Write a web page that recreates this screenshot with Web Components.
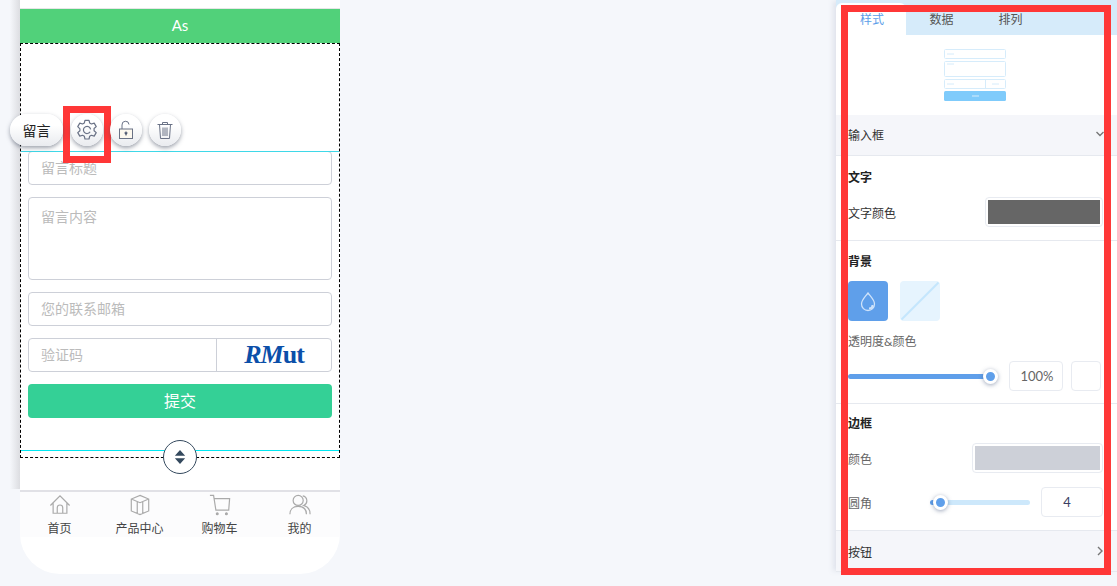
<!DOCTYPE html>
<html lang="zh">
<head>
<meta charset="utf-8">
<title>留言</title>
<style>
	html, body {
		margin: 0;
		height: 586px;
		overflow: hidden;
		background: #f5f7fb;
		font-family: Lato, "Noto Sans CJK SC", sans-serif;
	}
	body {
		position: relative;
		display: flex;
		justify-content: space-between;
		align-items: flex-start;
	}
</style>
</head>
<body>
<phone-preview></phone-preview>
<style-panel></style-panel>
<red-mark style="left:63px;top:106px;width:48px;height:57px"></red-mark>
<red-mark style="left:841px;top:5px;width:270px;height:570px"></red-mark>

<script>
	class RedMark extends HTMLElement {
		constructor() {
			super();
			let shadowRoot = this.attachShadow({mode: 'open'});
			shadowRoot.innerHTML = `
				<style>
					:host {
						position: absolute;
						box-sizing: border-box;
						border: 7px solid #ff3737;
						pointer-events: none;
					}
				</style>
			`;
		}
	}

	class FormField extends HTMLElement {
		constructor() {
			super();
			let shadowRoot = this.attachShadow({mode: 'open'});
			shadowRoot.innerHTML = `
				<style>
					:host {
						display: flex;
						box-sizing: border-box;
						height: 34px;
						border: 1px solid #cdd0d8;
						border-radius: 4px;
						background: #fff;
						font-size: 14px;
						line-height: 32px;
						color: #bbb;
					}
					:host([tall]) {
						height: 83px;
						line-height: 38px;
					}
					.label {
						flex: 1;
						padding-left: 12px;
					}
					::slotted(*) {
						width: 114px;
						border-left: 1px solid #cdd0d8;
					}
				</style>
				<div class="label">${this.getAttribute('label')}</div>
				<slot></slot>
			`;
		}
	}

	class NavItem extends HTMLElement {
		constructor() {
			super();
			let shadowRoot = this.attachShadow({mode: 'open'});
			shadowRoot.innerHTML = `
				<style>
					:host {
						flex: 1;
						display: flex;
						flex-direction: column;
						align-items: center;
						box-sizing: border-box;
						padding-right: 1px;
						font-size: 12px;
						line-height: 16px;
						color: #444;
					}
					::slotted(svg) {
						display: block;
						width: 22px;
						height: 22px;
						margin: 2px 0 5px;
						fill: none;
						stroke: #aaa;
						stroke-width: 1.3;
					}
				</style>
				<slot></slot>
				<span>${this.getAttribute('label')}</span>
			`;
		}
	}

	class ToolButton extends HTMLElement {
		constructor() {
			super();
			let shadowRoot = this.attachShadow({mode: 'open'});
			shadowRoot.innerHTML = `
				<style>
					:host {
						display: flex;
						align-items: center;
						justify-content: center;
						box-sizing: border-box;
						width: 32px;
						height: 32px;
						border-radius: 16px;
						background: linear-gradient(#fff 35%, #e9ebef);
						box-shadow: 0 2px 4px rgba(60, 70, 90, .5);
						font-size: 14px;
						color: #222;
					}
					:host([wide]) {
						width: 53px;
						margin-right: 1px;
					}
					::slotted(svg) {
						width: 20px;
						height: 20px;
						fill: none;
						stroke: #6a7286;
						stroke-width: 1;
					}
				</style>
				<slot></slot>
			`;
		}
	}

	class PhonePreview extends HTMLElement {
		constructor() {
			super();
			let shadowRoot = this.attachShadow({mode: 'open'});
			shadowRoot.innerHTML = `
				<style>
					:host {
						position: relative;
						display: flex;
						flex-direction: column;
						flex: none;
						width: 320px;
						height: 574px;
						margin-left: 20px;
						background: #fff;
						border-radius: 0 0 40px 40px;
					}
					:host::before {
						content: '';
						position: absolute;
						left: -20px;
						top: 0;
						width: 20px;
						height: 489px;
						background: linear-gradient(90deg, #f5f7fb 50%, #dcdde1);
					}
					.top {
						height: 8px;
						border-bottom: 1px solid #e6e6e6;
					}
					.title {
						height: 34px;
						background: #51d17a;
						color: #fff;
						font-size: 15px;
						line-height: 33px;
						text-align: center;
					}
					.module {
						position: relative;
						box-sizing: border-box;
						display: flex;
						flex-direction: column;
						gap: 12px;
						height: 415px;
						padding: 107px 7px 0;
						border: 1px dashed #000;
					}
					.line {
						position: absolute;
						left: 0;
						right: 0;
						height: 1px;
						background: #3fd8e8;
					}
					.line.top-line {
						top: 107px;
					}
					.line.bottom-line {
						top: 406px;
						background: #00e8f2;
					}
					.captcha {
						display: block;
						text-align: center;
						font: bold 26px/31px "Liberation Serif", serif;
						letter-spacing: -1px;
						color: #0b4fa9;
					}
					.submit {
						height: 34px;
						border-radius: 4px;
						background: #34d096;
						color: #fff;
						font-size: 16px;
						line-height: 34px;
						text-align: center;
					}
					.tools {
						position: absolute;
						left: -11px;
						top: 70px;
						display: flex;
						gap: 7px;
						z-index: 2;
					}
					.handle {
						position: absolute;
						left: 142px;
						top: 396px;
						box-sizing: border-box;
						width: 34px;
						height: 34px;
						border: 1.5px solid #34495e;
						border-radius: 50%;
						background: #fff;
						display: flex;
						align-items: center;
						justify-content: center;
						z-index: 2;
					}
					.spacer {
						height: 32px;
					}
					.nav {
						display: flex;
						box-sizing: border-box;
						height: 47px;
						border-top: 2px solid #e1e1e6;
						background: #fcfcfd;
					}
				</style>
				<div class="top"></div>
				<div class="title">As</div>
				<div class="module">
					<div class="line top-line"></div>
					<div class="line bottom-line"></div>
					<div class="tools">
						<tool-button wide>留言</tool-button>
						<tool-button>
							<svg viewBox="0 0 20 20" style="width:24px;height:24px">
								<path d="M8.300 1.900h3.400l.5 2.200 1.500.9 2.300-.7 1.700 2.900-1.800 1.600v1.800l1.800 1.600-1.700 2.900-2.300-.7-1.500.9-.5 2.200H8.300l-.5-2.200-1.500-.9-2.300.7-1.700-2.900 1.800-1.600V9L2.300 7.200 4 4.300l2.300.7 1.500-.9z" stroke-linejoin="round"/>
								<path d="M12.600 11.500A3 3 0 1 1 13 9.500"/>
							</svg>
						</tool-button>
						<tool-button>
							<svg viewBox="0 0 20 20">
								<rect x="3.500" y="9" width="13" height="9.500" fill="#fdf8ee"/>
								<path d="M6 9V5a3.500 3.500 0 0 1 7-.5"/>
								<circle cx="10" cy="13" r="1.100" fill="#3d4660"/>
								<path d="M10 13v2.500" stroke="#3d4660"/>
							</svg>
						</tool-button>
						<tool-button>
							<svg viewBox="0 0 20 20">
								<path d="M2.500 4.500h15M7.500 4.500V2.500h5v2M4.500 4.500l1 14h9l1-14M8 7.500v8.500M10 7.500v8.500M12 7.500v8.500"/>
							</svg>
						</tool-button>
					</div>
					<form-field label="留言标题"></form-field>
					<form-field tall label="留言内容"></form-field>
					<form-field label="您的联系邮箱"></form-field>
					<form-field label="验证码"><span class="captcha"><i>RM</i>ut</span></form-field>
					<div class="submit">提交</div>
					<div class="handle">
						<svg width="12" height="14" viewBox="0 0 14 16" preserveAspectRatio="none">
							<path d="M7 0l6 6.500H1zM1 9.500h12L7 16z" fill="#34495e"/>
						</svg>
					</div>
				</div>
				<div class="spacer"></div>
				<div class="nav">
					<nav-item label="首页">
						<svg viewBox="0 0 24 24"><path d="M1.500 12.500L12 2l10.500 10.500M4.500 10v11h15V10M9 21v-6a3 3 0 0 1 6 0v6"/></svg>
					</nav-item>
					<nav-item label="产品中心">
						<svg viewBox="0 0 24 24"><path d="M12 1.500l9.500 4v13l-9.500 4-9.500-4v-13zM2.500 5.500l9.500 4 9.500-4M9 8.200v13M15 8.200v13"/></svg>
					</nav-item>
					<nav-item label="购物车">
						<svg viewBox="0 0 24 24"><path d="M1 1.500h4l2.500 16h14l1-12.500H5.500"/><circle cx="9" cy="21.500" r="1" fill="#aaa"/><circle cx="19" cy="21.500" r="1" fill="#aaa"/></svg>
					</nav-item>
					<nav-item label="我的">
						<svg viewBox="0 0 24 24"><circle cx="10" cy="7" r="5.500"/><path d="M1 22c0-5 3-8.500 9-8.500s9 3.500 9 8.500M15 2a5.500 5.500 0 0 1 1 10.500c4 1 7 4.500 7 9.500"/></svg>
					</nav-item>
				</div>
			`;
		}
	}

	class PanelSlider extends HTMLElement {
		constructor() {
			super();
			let at = this.getAttribute('at');
			let shadowRoot = this.attachShadow({mode: 'open'});
			shadowRoot.innerHTML = `
				<style>
					:host {
						position: relative;
						display: block;
						height: 5px;
						border-radius: 3px;
						background: linear-gradient(90deg, #5f9fea ${at}px, #cde8fb ${at}px);
					}
					.thumb {
						position: absolute;
						left: ${at - 7}px;
						top: -5px;
						box-sizing: border-box;
						width: 15px;
						height: 15px;
						border: 3px solid #fff;
						border-radius: 50%;
						background: #5f9fea;
						box-shadow: 0 1px 4px rgba(60, 80, 120, .5);
					}
				</style>
				<div class="thumb"></div>
			`;
		}
	}

	class PanelBox extends HTMLElement {
		constructor() {
			super();
			let shadowRoot = this.attachShadow({mode: 'open'});
			shadowRoot.innerHTML = `
				<style>
					:host {
						display: flex;
						box-sizing: border-box;
						height: 30px;
						padding: 2px;
						border: 1px solid #e8ebf1;
						border-radius: 4px;
						background: #fff;
						align-items: center;
						justify-content: center;
						font-size: 13px;
						color: #666;
					}
					.fill {
						flex: 1;
						align-self: stretch;
					}
				</style>
				${this.hasAttribute('fill') ? `<div class="fill" style="background:${this.getAttribute('fill')}"></div>` : ''}
				<slot></slot>
			`;
		}
	}

	class StylePanel extends HTMLElement {
		constructor() {
			super();
			let shadowRoot = this.attachShadow({mode: 'open'});
			shadowRoot.innerHTML = `
				<style>
					:host {
						display: block;
						flex: none;
						width: 281px;
						height: 572px;
						background: #fff;
						box-shadow: -4px 0 5px -1px rgba(200, 205, 220, .45);
						font-size: 12px;
						color: #333;
					}
					.tabs {
						display: flex;
						box-sizing: border-box;
						height: 35px;
						padding-top: 3px;
						background: #d6ebfa;
						line-height: 33px;
						text-align: center;
						color: #555;
					}
					.tabs div {
						box-sizing: border-box;
						width: 69px;
						padding-left: 2px;
					}
					.tabs .active {
						width: 70px;
						border-radius: 6px 6px 0 0;
						background: #fff;
						color: #5b9de8;
					}
					.preview {
						display: flex;
						justify-content: center;
						box-sizing: border-box;
						height: 80px;
						padding: 14px 3px 0 0;
					}
					.fold {
						display: flex;
						justify-content: space-between;
						align-items: center;
						box-sizing: border-box;
						height: 41px;
						padding: 0 13px 0 12px;
						background: #f5f6fa;
						border-bottom: 1px solid #e6e9ef;
					}
					.section {
						box-sizing: border-box;
						padding: 0 14px 0 12px;
						border-bottom: 1px solid #e6e9ef;
					}
					.heading {
						font-weight: 700;
						color: #222;
						line-height: 18px;
					}
					.row {
						display: flex;
						align-items: center;
						justify-content: space-between;
						height: 30px;
					}
					.gray {
						color: #666;
					}
					.kinds {
						display: flex;
						gap: 12px;
						margin-top: 10px;
					}
					.kinds div {
						width: 40px;
						height: 40px;
						border-radius: 4px;
						background: #5f9fea;
					}
					.kinds svg {
						display: block;
					}
					.kinds .none {
						background: #e6f4fe;
					}
				</style>
				<div class="tabs">
					<div class="active">样式</div>
					<div>数据</div>
					<div>排列</div>
				</div>
				<div class="preview">
					<svg width="62" height="52" viewBox="0 0 62 52" fill="none" stroke="#d6ecfb">
						<rect x=".5" y=".5" width="61" height="9" rx="1"/>
						<rect x=".5" y="12.500" width="61" height="15" rx="1"/>
						<rect x=".5" y="30.500" width="61" height="9" rx="1"/>
						<path d="M41.500 30.500v9M3 5h7M3 15h7M3 35h7M48 35h7"/>
						<rect y="42" width="62" height="10" rx="1.500" fill="#7fcbfb" stroke="none"/>
						<path d="M28 47h7" stroke="#d6ecfb"/>
					</svg>
				</div>
				<div class="fold" style="padding-bottom:2px">
					<span>输入框</span>
					<svg width="8" height="8" viewBox="0 0 8 8" fill="none" stroke="#777" stroke-width="1.400"><path d="M.5 2L4 5.500 7.500 2"/></svg>
				</div>
				<div class="section" style="height:85px;padding-top:13px">
					<div class="heading">文字</div>
					<div class="row" style="margin-top:10px">
						<span>文字颜色</span>
						<panel-box fill="#666" style="width:118px"></panel-box>
					</div>
				</div>
				<div class="section" style="height:163px;padding-top:12px">
					<div class="heading">背景</div>
					<div class="kinds">
						<div>
							<svg width="40" height="40" viewBox="0 0 40 40" fill="none" stroke="#cfe3fa" stroke-width="1.300">
								<path d="M20 12c3 4 6.500 7 6.500 11a6.500 6.500 0 0 1-13 0c0-4 3.500-7 6.500-11z"/>
								<path d="M21 27.500c2 0 3.500-1.500 3.500-3.500" stroke-width="2"/>
							</svg>
						</div>
						<div class="none">
							<svg width="40" height="40" viewBox="0 0 40 40" fill="none" stroke="#c4e6fd" stroke-width="2"><path d="M1.500 38.500l37-37"/></svg>
						</div>
					</div>
					<div class="gray" style="line-height:18px;margin-top:12px">透明度&amp;颜色</div>
					<div class="row" style="margin-top:10px;justify-content:flex-start">
						<panel-slider at="142" style="width:142px"></panel-slider>
						<panel-box style="width:54px;margin-left:19px;padding-left:4px">100%</panel-box>
						<panel-box style="width:30px;margin-left:8px"></panel-box>
					</div>
				</div>
				<div class="section" style="height:127px;padding-top:11px">
					<div class="heading">边框</div>
					<div class="row" style="margin-top:10px">
						<span class="gray">颜色</span>
						<panel-box fill="#cdd0d8" style="width:131px"></panel-box>
					</div>
					<div class="row" style="margin-top:14px;justify-content:flex-start">
						<span class="gray">圆角</span>
						<panel-slider at="10" style="width:100px;margin-left:58px"></panel-slider>
						<panel-box style="width:62px;margin-left:11px;padding-right:12px;color:#3a3f63">4</panel-box>
					</div>
				</div>
				<div class="fold">
					<span>按钮</span>
					<svg width="8" height="10" viewBox="0 0 8 10" fill="none" stroke="#777" stroke-width="1.400"><path d="M2 1l4 4-4 4"/></svg>
				</div>
			`;
		}
	}

	// children first, so that upgrades inside shadow roots find their classes
	customElements.define('red-mark', RedMark);
	customElements.define('form-field', FormField);
	customElements.define('nav-item', NavItem);
	customElements.define('tool-button', ToolButton);
	customElements.define('panel-slider', PanelSlider);
	customElements.define('panel-box', PanelBox);
	customElements.define('phone-preview', PhonePreview);
	customElements.define('style-panel', StylePanel);
</script>
</body>
</html>
